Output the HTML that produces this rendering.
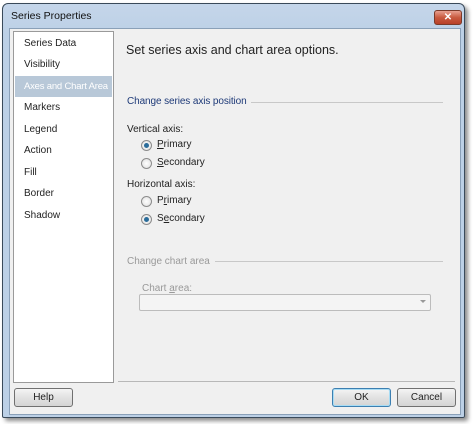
<!DOCTYPE html><html><head><style>
body{margin:0;width:474px;height:424px;background:#fff;font-family:"Liberation Sans",sans-serif;font-size:10px;position:relative;overflow:hidden}
.a{position:absolute;white-space:nowrap}
.frame{left:2px;top:3px;width:461px;height:413px;border:1px solid #3a4a5a;border-radius:6px 6px 2px 2px;background:linear-gradient(#c5d6ea,#bcd0e6 30px,#bcd0e6);box-shadow:3px 3px 4px rgba(0,0,0,.45)}
.inner{left:9px;top:28px;width:450px;height:385px;background:#f0f0f0;border:1px solid #8aa0b8}
.list{left:13px;top:31px;width:99px;height:350px;background:#fff;border:1px solid #9a9a9a}
.it{position:absolute;left:10px;color:#222;white-space:nowrap}
.btn{position:absolute;height:17px;border:1px solid #707070;border-radius:3px;background:linear-gradient(#f4f4f4,#e2e2e2 50%,#d4d4d4);text-align:center;line-height:17px;color:#222}
.rad{position:absolute;width:9px;height:9px;border:1px solid #8c8c8c;border-radius:50%;background:radial-gradient(#fff,#ddd)}
.rad.on::after{content:"";position:absolute;left:2px;top:2px;width:5px;height:5px;border-radius:50%;background:#2a6c9a}
.t{position:absolute;color:#222;white-space:nowrap}
</style></head><body>
<div class="a frame"></div>
<div class="a" style="left:11px;top:10px;font-size:10.5px;color:#111">Series Properties</div>
<div class="a" style="left:434px;top:10px;width:26px;height:13px;border:1px solid #7a3a2a;border-radius:3px;background:linear-gradient(#e8a090,#c85a40 50%,#b84028);color:#fff;font-weight:bold;font-size:10px;text-align:center;line-height:13px">✕</div>
<div class="a inner"></div>
<div class="a list">
<div class="it" style="top:6px">Series Data</div>
<div class="it" style="top:27px">Visibility</div>
<div class="a" style="left:1px;top:44px;width:97px;height:21px;background:#b8c8d8"></div>
<div class="it" style="top:49px;color:#fff;font-size:9.5px;letter-spacing:-0.2px">Axes and Chart Area</div>
<div class="it" style="top:70px">Markers</div>
<div class="it" style="top:92px">Legend</div>
<div class="it" style="top:113px">Action</div>
<div class="it" style="top:135px">Fill</div>
<div class="it" style="top:156px">Border</div>
<div class="it" style="top:178px">Shadow</div>
</div>
<div class="t" style="left:126px;top:43px;font-size:12.5px">Set series axis and chart area options.</div>
<div class="t" style="left:127px;top:96px;color:#1e3a78;letter-spacing:-0.1px">Change series axis position</div>
<div class="a" style="left:251px;top:102px;width:192px;height:1px;background:#c8c8c8"></div>
<div class="t" style="left:127px;top:124px">Vertical axis:</div>
<div class="rad on" style="left:141px;top:140px"></div><div class="t" style="left:157px;top:139px"><u>P</u>rimary</div>
<div class="rad" style="left:141px;top:158px"></div><div class="t" style="left:157px;top:157px"><u>S</u>econdary</div>
<div class="t" style="left:127px;top:179px">Horizontal axis:</div>
<div class="rad" style="left:141px;top:196px"></div><div class="t" style="left:157px;top:195px">P<u>r</u>imary</div>
<div class="rad on" style="left:141px;top:214px"></div><div class="t" style="left:157px;top:213px">S<u>e</u>condary</div>
<div class="t" style="left:127px;top:256px;color:#999">Change chart area</div>
<div class="a" style="left:215px;top:261px;width:228px;height:1px;background:#c8c8c8"></div>
<div class="t" style="left:142px;top:283px;color:#999">Chart <u>a</u>rea:</div>
<div class="a" style="left:139px;top:294px;width:290px;height:15px;border:1px solid #bcbcbc;border-radius:2px;background:#f4f4f4"></div>
<div class="a" style="left:420px;top:300px;width:0;height:0;border-left:3px solid transparent;border-right:3px solid transparent;border-top:3px solid #999"></div>
<div class="a" style="left:118px;top:381px;width:337px;height:1px;background:#b8b8b8"></div>
<div class="btn" style="left:14px;top:388px;width:57px">Help</div>
<div class="btn" style="left:332px;top:388px;width:57px;border-color:#3c7fb1;box-shadow:inset 0 0 0 1px #a8dcf4">OK</div>
<div class="btn" style="left:397px;top:388px;width:57px">Cancel</div>
</body></html>
